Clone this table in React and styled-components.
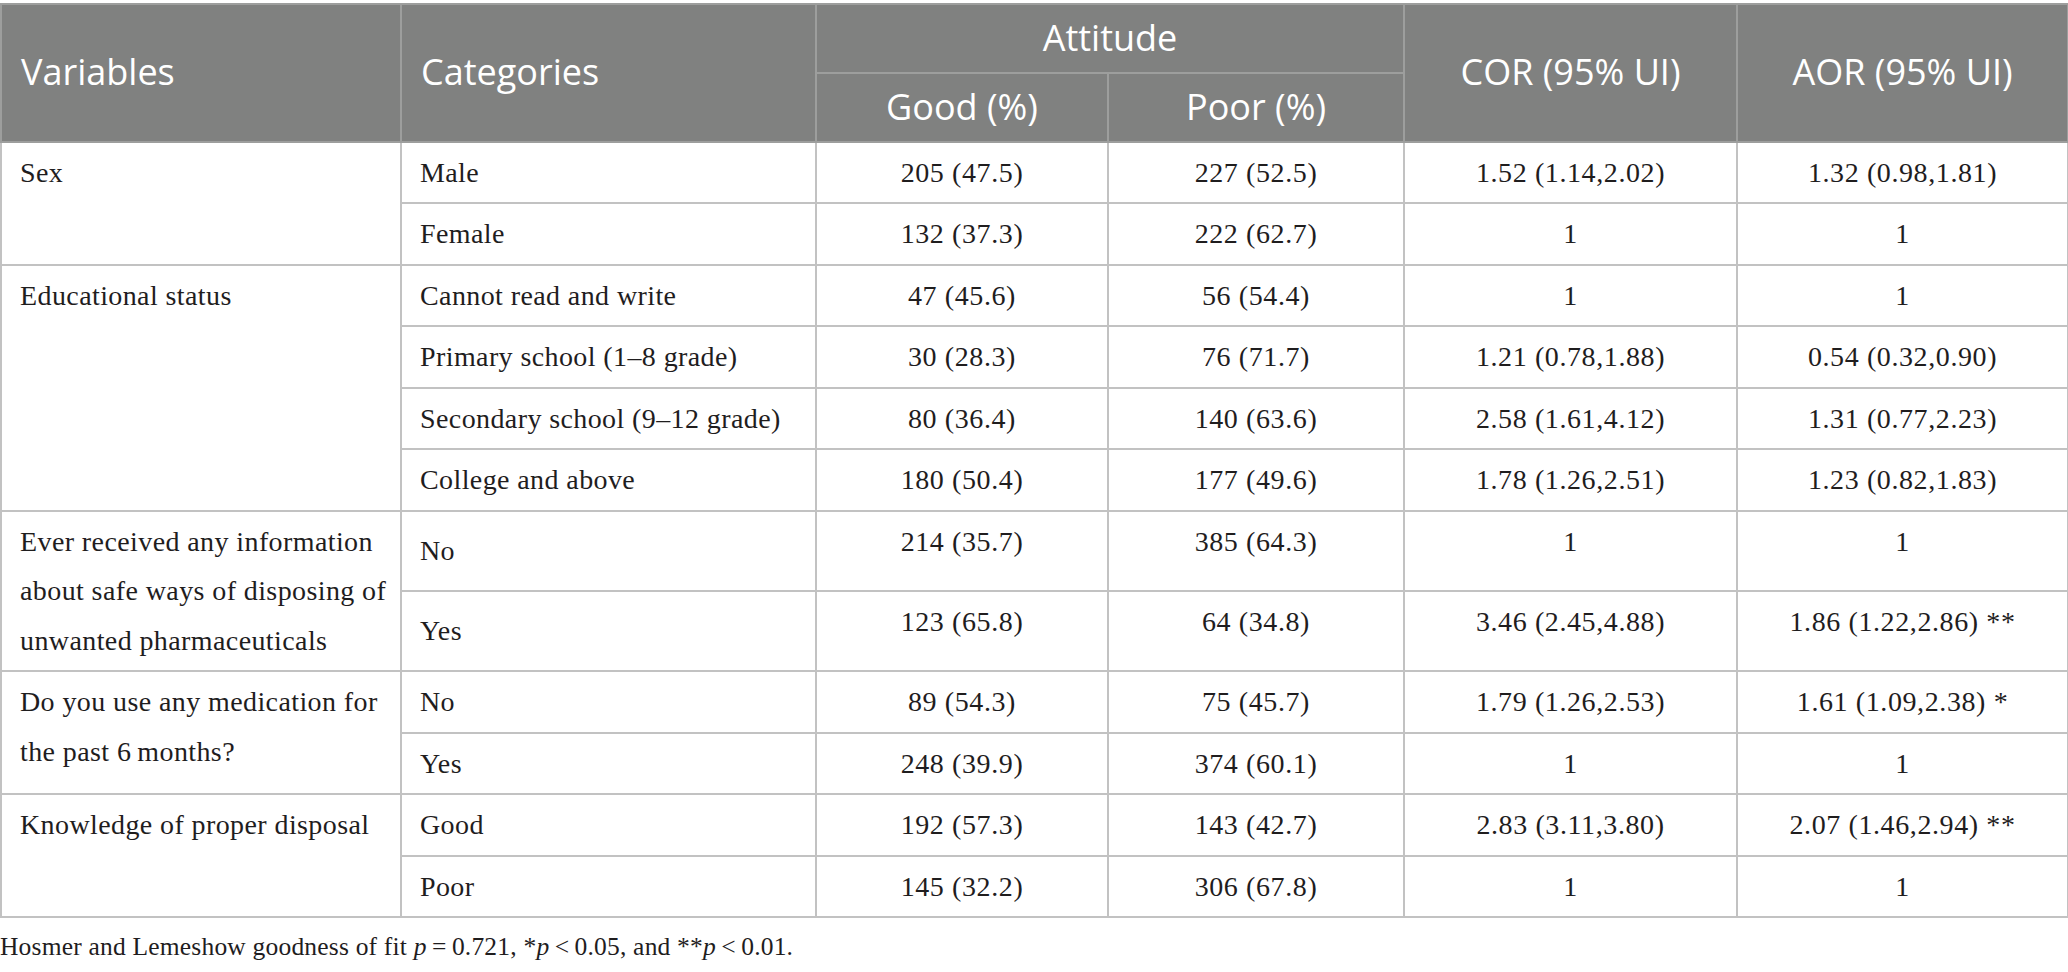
import React from 'react';
import styled, { createGlobalStyle } from 'styled-components';

const GlobalStyle = createGlobalStyle`
  html, body {
    margin: 0;
    padding: 0;
    background: #ffffff;
  }
`;

const Page = styled.div`
  padding-top: 3px;
  width: 2068px;
`;

const Table = styled.table`
  width: 2067px;
  border-collapse: collapse;
  table-layout: fixed;
  font-family: "Liberation Serif", "Times New Roman", serif;
  color: #1f1d1e;
`;

const HeadCell = styled.th`
  background: #808180;
  color: #ffffff;
  font-family: "Open Sans", "Noto Sans", sans-serif;
  font-weight: 400;
  font-size: 36px;
  line-height: 58.75px;
  padding: 4px ${p => (p.$align === 'left' ? '19px' : '0')};
  text-align: ${p => p.$align || 'center'};
  vertical-align: middle;
  border: 2px solid #9d9e9d;
  white-space: nowrap;
`;

const Cell = styled.td`
  font-size: 28px;
  line-height: 49.5px;
  letter-spacing: ${p => (p.$align === 'center' ? '0.6px' : '0.4px')};
  padding: 5px ${p => (p.$align === 'center' ? '0' : '18px')};
  text-align: ${p => p.$align || 'left'};
  vertical-align: ${p => p.$valign || 'top'};
  border: 2px solid #c2c2c2;
  white-space: nowrap;
`;

const Footnote = styled.p`
  margin: 14px 0 0 0;
  font-family: "Liberation Serif", "Times New Roman", serif;
  font-size: 25.5px;
  letter-spacing: 0.2px;
  color: #1f1d1e;
`;

const thin = '\u2009';

const groups = [
  {
    variable: ['Sex'],
    rows: [
      ['Male', '205 (47.5)', '227 (52.5)', '1.52 (1.14,2.02)', '1.32 (0.98,1.81)'],
      ['Female', '132 (37.3)', '222 (62.7)', '1', '1'],
    ],
  },
  {
    variable: ['Educational status'],
    rows: [
      ['Cannot read and write', '47 (45.6)', '56 (54.4)', '1', '1'],
      ['Primary school (1–8 grade)', '30 (28.3)', '76 (71.7)', '1.21 (0.78,1.88)', '0.54 (0.32,0.90)'],
      ['Secondary school (9–12 grade)', '80 (36.4)', '140 (63.6)', '2.58 (1.61,4.12)', '1.31 (0.77,2.23)'],
      ['College and above', '180 (50.4)', '177 (49.6)', '1.78 (1.26,2.51)', '1.23 (0.82,1.83)'],
    ],
  },
  {
    variable: ['Ever received any information', 'about safe ways of disposing of', 'unwanted pharmaceuticals'],
    rows: [
      ['No', '214 (35.7)', '385 (64.3)', '1', '1'],
      ['Yes', '123 (65.8)', '64 (34.8)', '3.46 (2.45,4.88)', '1.86 (1.22,2.86) **'],
    ],
  },
  {
    variable: ['Do you use any medication for', `the past 6${thin}months?`],
    rows: [
      ['No', '89 (54.3)', '75 (45.7)', '1.79 (1.26,2.53)', '1.61 (1.09,2.38) *'],
      ['Yes', '248 (39.9)', '374 (60.1)', '1', '1'],
    ],
  },
  {
    variable: ['Knowledge of proper disposal'],
    rows: [
      ['Good', '192 (57.3)', '143 (42.7)', '2.83 (3.11,3.80)', '2.07 (1.46,2.94) **'],
      ['Poor', '145 (32.2)', '306 (67.8)', '1', '1'],
    ],
  },
];

const colWidths = [400, 415, 292, 296, 333, 331];

export default function App() {
  return (
    <Page>
      <GlobalStyle />
      <Table>
        <colgroup>
          {colWidths.map((w, i) => <col key={i} style={{ width: w }} />)}
        </colgroup>
        <thead>
          <tr>
            <HeadCell rowSpan={2} $align="left">Variables</HeadCell>
            <HeadCell rowSpan={2} $align="left">Categories</HeadCell>
            <HeadCell colSpan={2}>Attitude</HeadCell>
            <HeadCell rowSpan={2}>COR (95% UI)</HeadCell>
            <HeadCell rowSpan={2}>AOR (95% UI)</HeadCell>
          </tr>
          <tr>
            <HeadCell>Good (%)</HeadCell>
            <HeadCell>Poor (%)</HeadCell>
          </tr>
        </thead>
        <tbody>
          {groups.map((g, gi) =>
            g.rows.map((r, ri) => (
              <tr key={`${gi}-${ri}`}>
                {ri === 0 && (
                  <Cell rowSpan={g.rows.length}>
                    {g.variable.map((line, li) => (
                      <React.Fragment key={li}>
                        {li > 0 && <br />}
                        {line}
                      </React.Fragment>
                    ))}
                  </Cell>
                )}
                <Cell $valign="middle">{r[0]}</Cell>
                {r.slice(1).map((v, vi) => (
                  <Cell key={vi} $align="center">{v}</Cell>
                ))}
              </tr>
            ))
          )}
        </tbody>
      </Table>
      <Footnote>
        Hosmer and Lemeshow goodness of fit <i>p</i>{thin}={thin}0.721, *<i>p</i>{thin}&lt;{thin}0.05, and **<i>p</i>{thin}&lt;{thin}0.01.
      </Footnote>
    </Page>
  );
}
